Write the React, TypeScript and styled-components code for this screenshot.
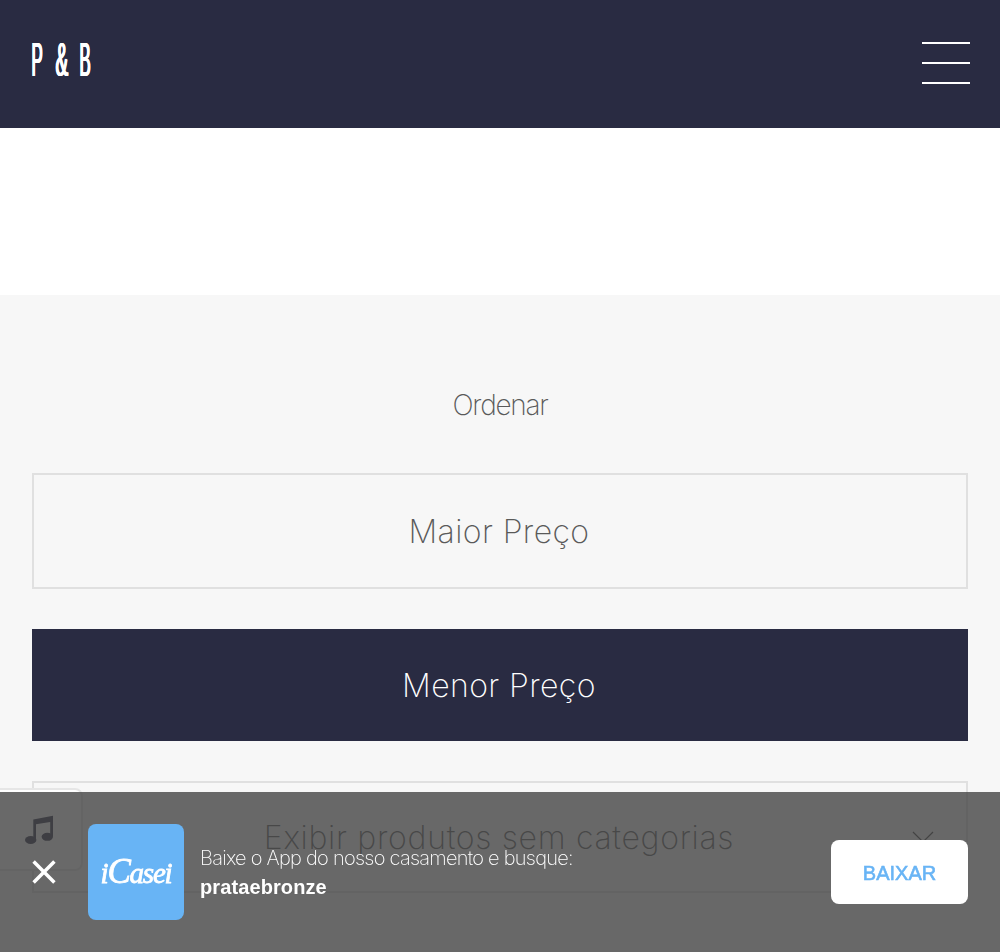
import React from "react";
import styled, { createGlobalStyle } from "styled-components";

const navy = "#292b42";
const sky = "#68b4f5";
const thin = `"Inter", "Liberation Sans", sans-serif`;
const sans = `"Liberation Sans", Arial, sans-serif`;

const GlobalStyle = createGlobalStyle`
  * { box-sizing: border-box; }
  html, body { margin: 0; background: #fff; height: 952px; overflow: hidden; }
  button { border: 0; margin: 0; padding: 0; background: none; font: inherit; }
`;

const Page = styled.div`
  height: 952px;
  overflow: hidden;
  font-family: ${thin};
`;

const Header = styled.header`
  display: flex;
  justify-content: space-between;
  align-items: flex-start;
  height: 128px;
  padding: 35px 30px 0 31px;
  background: ${navy};
`;

const Monogram = styled.div`
  display: flex;
  width: 60px;
  margin-top: 1px;
  justify-content: space-between;
  color: #fff;
  font: 400 48px/48px ${sans};
`;

const Initial = styled.span<{ $scale: number }>`
  width: 12px;
  white-space: nowrap;
  transform: scaleX(${(p) => p.$scale});
  transform-origin: 0 0;
  text-shadow: 1px 0 #fff, 2px 0 #fff, 3px 0 #fff;
`;

const MenuButton = styled.button`
  display: flex;
  flex-direction: column;
  gap: 18px;
  margin-top: 7px;
`;

const MenuLine = styled.span`
  width: 48px;
  height: 2px;
  background: #fff;
`;

const SortSection = styled.main`
  display: flex;
  flex-direction: column;
  height: 657px;
  margin-top: 167px;
  padding: 88px 32px 0;
  background: #f7f7f7;
`;

const Title = styled.h2`
  margin: 0 0 46px;
  height: 44px;
  color: #5a5a5a;
  font-size: 28px;
  font-weight: 200;
  line-height: 44px;
  letter-spacing: -1.3px;
  text-align: center;
`;

const Option = styled.button<{ $active?: boolean; $height: number; $spacing: number }>`
  display: flex;
  flex-shrink: 0;
  align-items: center;
  justify-content: center;
  position: relative;
  height: ${(p) => p.$height}px;
  margin-bottom: 40px;
  padding: 1px 2px 0 0;
  border: ${(p) => (p.$active ? "0" : "2px solid #e0e0e0")};
  background: ${(p) => (p.$active ? navy : "transparent")};
  color: ${(p) => (p.$active ? "#fff" : "#5a5a5a")};
  font-size: 32px;
  font-weight: 200;
  letter-spacing: ${(p) => p.$spacing}px;
`;

const Chevron = styled.svg`
  position: absolute;
  right: 32px;
  top: 48px;
`;

const MusicTab = styled.div`
  position: fixed;
  left: -2px;
  top: 788px;
  width: 85px;
  height: 83px;
  display: flex;
  align-items: flex-start;
  padding: 25px 0 0 25px;
  border: 2px solid #e6e6e6;
  border-radius: 0 8px 8px 0;
  background: #fff;
`;

const AppBanner = styled.aside`
  position: fixed;
  left: 0;
  right: 0;
  bottom: 0;
  display: flex;
  align-items: center;
  height: 160px;
  padding: 0 32px;
  background: rgba(68, 68, 68, 0.8);
`;

const CloseButton = styled.button`
  display: flex;
  width: 24px;
  height: 24px;
  margin-right: 32px;
`;

const AppIcon = styled.div`
  display: flex;
  align-items: center;
  justify-content: center;
  width: 96px;
  height: 96px;
  margin-right: 16px;
  border-radius: 8px;
  background: ${sky};
  color: #fff;
`;

const Wordmark = styled.span`
  font: italic 400 29px/36px "Liberation Serif", serif;
  letter-spacing: -1.2px;
  -webkit-text-stroke: 0.8px #fff;
`;

const Capital = styled.span`
  font-size: 35px;
`;

const BannerText = styled.div`
  flex: 1;
  padding-top: 2px;
  color: #fff;
  font-size: 20px;
  line-height: 29px;
`;

const Invitation = styled.div`
  font-weight: 200;
  letter-spacing: -0.74px;
`;

const SearchName = styled.div`
  font-family: ${sans};
  font-weight: 700;
  letter-spacing: 0.1px;
`;

const DownloadButton = styled.button`
  width: 137px;
  height: 64px;
  padding-top: 2px;
  border-radius: 8px;
  background: #fff;
  color: ${sky};
  font: 400 20px/24px ${sans};
  -webkit-text-stroke: 0.6px ${sky};
`;

export default function App() {
  return (
    <Page>
      <GlobalStyle />
      <Header>
        <Monogram>
          <Initial $scale={0.35}>P</Initial>
          <Initial $scale={0.39}>&amp;</Initial>
          <Initial $scale={0.35}>B</Initial>
        </Monogram>
        <MenuButton aria-label="Menu">
          <MenuLine />
          <MenuLine />
          <MenuLine />
        </MenuButton>
      </Header>
      <SortSection>
        <Title>Ordenar</Title>
        <Option $height={116} $spacing={0.4}>Maior Preço</Option>
        <Option $height={112} $spacing={0.4} $active>Menor Preço</Option>
        <Option $height={112} $spacing={0.7}>
          Exibir produtos sem categorias
          <Chevron width="22" height="13" viewBox="0 0 22 13" fill="none" stroke="#444" strokeWidth="1.2">
            <path d="M1 1l10 10L21 1" />
          </Chevron>
        </Option>
      </SortSection>
      <MusicTab>
        <svg width="29" height="29" viewBox="0 0 29 29" fill={navy}>
          <path d="M8.3 4.5L28 0.8V21.5H25.2V7L11 9.2V25H8.3Z" />
          <ellipse cx="5.7" cy="25" rx="5.7" ry="4" />
          <ellipse cx="22.3" cy="21.8" rx="5.7" ry="4" />
        </svg>
      </MusicTab>
      <AppBanner>
        <CloseButton aria-label="Fechar">
          <svg width="24" height="24" viewBox="0 0 24 24" stroke="#fff" strokeWidth="3.5">
            <path d="M1.6 1.6l20.8 20.8M22.4 1.6l-20.8 20.8" />
          </svg>
        </CloseButton>
        <AppIcon>
          <Wordmark>
            i<Capital>C</Capital>asei
          </Wordmark>
        </AppIcon>
        <BannerText>
          <Invitation>Baixe o App do nosso casamento e busque:</Invitation>
          <SearchName>prataebronze</SearchName>
        </BannerText>
        <DownloadButton>BAIXAR</DownloadButton>
      </AppBanner>
    </Page>
  );
}
